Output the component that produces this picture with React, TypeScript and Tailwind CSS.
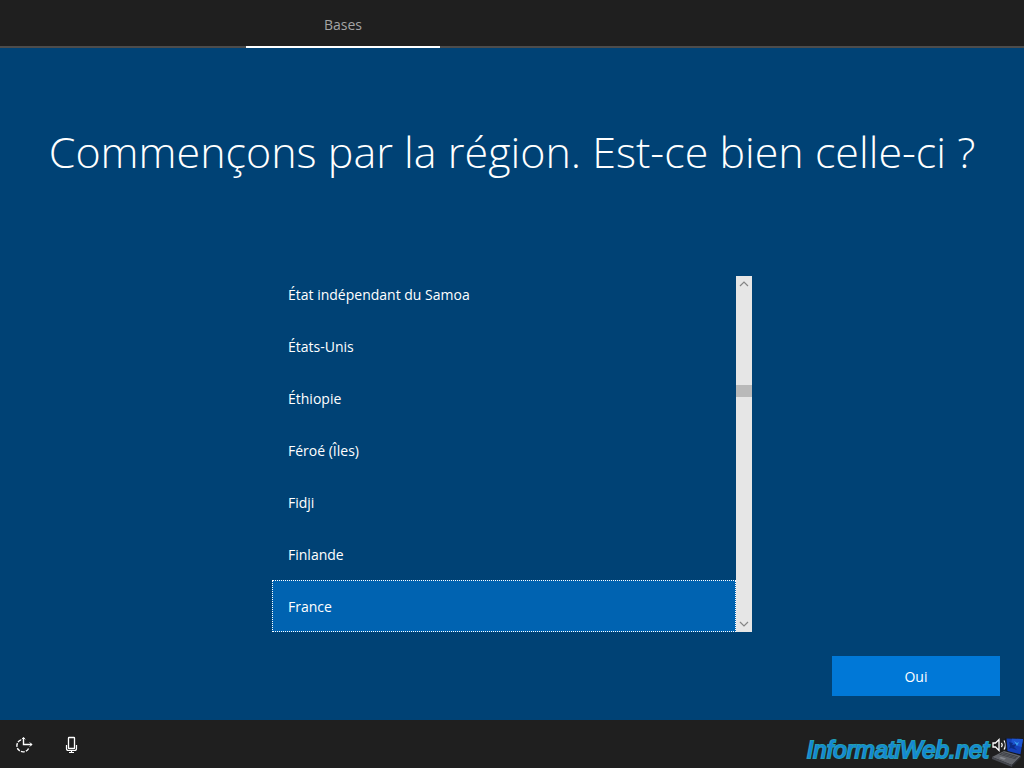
import { useState } from "react";

const regions = [
  "État indépendant du Samoa",
  "États-Unis",
  "Éthiopie",
  "Féroé (Îles)",
  "Fidji",
  "Finlande",
  "France",
];

function EaseOfAccessIcon() {
  return (
    <svg viewBox="0 0 18 18" className="size-[18px]" fill="none" stroke="#fff" strokeWidth="1.4" aria-hidden="true">
      <path d="M6 3.800a6.200 6.200 0 1 0 8 7.700" strokeDasharray="3.800 1.200" />
      <path d="M8.500 1.500v7H17" />
      <path d="M6.800 3.300 8.500 1.600l1.700 1.700M14.800 6.500l2 2-2 2" strokeWidth="1" />
    </svg>
  );
}

function MicrophoneIcon() {
  return (
    <svg viewBox="0 0 14 18" className="h-[18px] w-3.5" fill="none" stroke="#fff" aria-hidden="true">
      <rect x="3.500" y="1.500" width="6" height="11" rx="0.6" strokeWidth="1.3" />
      <path d="M1.500 9v3.500c0 1.300.7 2 2 2h6c1.300 0 2-.7 2-2V9M6.500 14.500v2M4 16.500h5" strokeWidth="1.2" />
    </svg>
  );
}

function SpeakerIcon() {
  return (
    <svg viewBox="0 0 16 16" className="size-4" fill="none" stroke="#fff" strokeWidth="1.3" aria-hidden="true">
      <path d="M1 6h2.500l3.500-3.500v11L3.500 10H1z" />
      <path d="M9.500 5.800q1.500 2.200 0 4.400M12 3.500q3 4.500 0 9" />
    </svg>
  );
}

function LaptopLogo() {
  return (
    <svg viewBox="0 0 32 32" className="size-8" aria-hidden="true">
      <path d="M13 2 31 2.500 29 20 14 16z" fill="#16181d" />
      <path d="M14.500 2.500 31 3 28.500 18.300 15.500 15z" fill="#1440b8" />
      <path d="M20 2.800 31 3 29.500 11 19 8z" fill="#1d55d0" />
      <path d="m17 6 4 1-1 2 5-1-3 3 3 3-6-2-2 1 1-3z" fill="#0c2b85" />
      <path d="m22 5 3 2 2-1-2 4z" fill="#38a0ee" />
      <path d="M12 15 29 20 20 29 0 21z" fill="#62656b" />
      <path d="m11.500 16.200 14.500 4.200-3 2.600L7 18.500z" fill="#34363c" />
      <path d="m8.500 18 15 4.200M10 17l15 4.300" stroke="#777b82" strokeWidth=".5" />
      <path d="m9 20.800 5 1.600-2 1.400-5-1.800z" fill="#85888e" />
      <path d="m0 21 20 8v2L0 23z" fill="#45484f" />
      <path d="m20 29 9-9v1.800L20 31z" fill="#2b2e34" />
    </svg>
  );
}

function ScrollBar() {
  return (
    <div className="flex w-4 flex-col bg-[#e6e6e6]">
      <button type="button" aria-label="Défiler vers le haut" className="flex h-4 items-center justify-center">
        <svg viewBox="0 0 10 6" className="h-1.5 w-2.5" fill="none" stroke="#858585" strokeWidth="1.2">
          <path d="m1 5 4-4 4 4" />
        </svg>
      </button>
      <div className="flex flex-1 flex-col">
        <div className="grow-[93]" />
        <div className="h-3 bg-[#b9b9b9]" />
        <div className="grow-[219]" />
      </div>
      <button type="button" aria-label="Défiler vers le bas" className="flex h-4 items-center justify-center">
        <svg viewBox="0 0 10 6" className="h-1.5 w-2.5" fill="none" stroke="#858585" strokeWidth="1.2">
          <path d="m1 1 4 4 4-4" />
        </svg>
      </button>
    </div>
  );
}

export default function App() {
  const [selected, setSelected] = useState("France");

  return (
    <div className="flex min-h-screen flex-col bg-[#004275] font-['Open_Sans','Noto_Sans',sans-serif] text-white">
      <header className="flex h-12 border-b-2 border-[#4c4c4c] bg-[#1f1f1f]">
        <nav className="-mb-0.5 ml-[24%] flex w-[19%]">
          <a href="#bases" className="flex flex-1 items-center justify-center border-b-2 border-white pt-1 text-sm text-[#a5a5a5]">
            Bases
          </a>
        </nav>
      </header>

      <main className="flex flex-1 flex-col px-6 pb-6">
        <h1 className="pt-[72px] text-center text-[43px] leading-16 font-light">
          Commençons par la région. Est-ce bien celle-ci ?
        </h1>

        <div className="mx-auto mt-23 flex h-[356px] w-full max-w-[480px]">
          <div role="listbox" aria-label="Région" className="flex flex-1 flex-col justify-end overflow-hidden">
            {regions.map((region) => (
              <button
                key={region}
                type="button"
                role="option"
                aria-selected={region === selected}
                onClick={() => setSelected(region)}
                className={
                  region === selected
                    ? "h-13 shrink-0 border border-dotted border-white bg-[#0063b1] px-[15px] pt-0.5 text-left text-sm"
                    : "h-13 shrink-0 border border-transparent px-[15px] pt-0.5 text-left text-sm"
                }
              >
                {region}
              </button>
            ))}
          </div>
          <ScrollBar />
        </div>

        <div className="mt-6 flex justify-end">
          <button type="button" className="h-10 w-42 bg-[#0078d7] pt-0.5 text-sm">
            Oui
          </button>
        </div>
      </main>

      <footer className="flex h-12 items-center justify-between bg-[#1f1f1f] pl-[15px]">
        <div className="flex items-center gap-8 pt-0.5">
          <button type="button" aria-label="Options d’ergonomie">
            <EaseOfAccessIcon />
          </button>
          <button type="button" aria-label="Microphone">
            <MicrophoneIcon />
          </button>
        </div>
        <div className="flex items-center">
          <span className="pt-3 pr-[3px] font-['Liberation_Sans',Arial,sans-serif] text-2xl leading-8 text-[#1485d6] italic [-webkit-text-stroke:2px_#22a0b4] [paint-order:stroke_fill]">
            InformatiWeb.net
          </span>
          <button type="button" aria-label="Volume" className="pt-0.5">
            <SpeakerIcon />
          </button>
          <span className="-ml-4 pt-4">
            <LaptopLogo />
          </span>
        </div>
      </footer>
    </div>
  );
}
